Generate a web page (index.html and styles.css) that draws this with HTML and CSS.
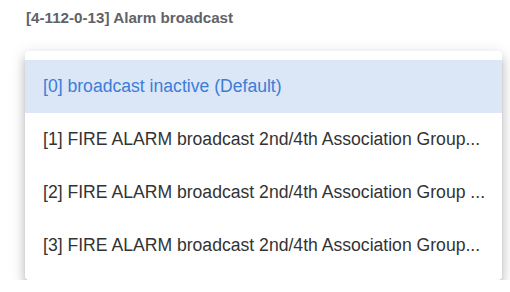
FILE: index.html
```html
<!DOCTYPE html>
<html lang="en">
<head>
  <meta charset="UTF-8" />
  <title>Alarm broadcast</title>
  <link rel="stylesheet" href="styles.css">
</head>
<body>
  <div class="field">
    <div class="field-label">[4-112-0-13] Alarm broadcast</div>
    <ul class="menu">
      <li class="menu-item selected">[0] broadcast inactive (Default)</li>
      <li class="menu-item">[1] FIRE ALARM broadcast 2nd/4th Association Group...</li>
      <li class="menu-item">[2] FIRE ALARM broadcast 2nd/4th Association Group ...</li>
      <li class="menu-item">[3] FIRE ALARM broadcast 2nd/4th Association Group...</li>
    </ul>
  </div>
</body>
</html>
```

FILE: styles.css
```css
body {
  font-family: 'Liberation Sans', Arial, sans-serif;
  margin: 0;
  padding: 0;
  background-color: #fff;
  color: #333;
}
.field {
  padding: 9px 8px 0 25px;
}
.field-label {
  font-size: 15.2px;
  font-weight: bold;
  color: #5f6368;
  padding-left: 1px;
  line-height: 18px;
}
.menu {
  list-style: none;
  margin: 24px 0 0;
  padding: 9px 0 8px;
  background-color: #fff;
  border-radius: 4px;
  box-shadow: 0 5px 5px -3px rgba(0, 0, 0, 0.2), 0 8px 10px 1px rgba(0, 0, 0, 0.14), 0 3px 14px 2px rgba(0, 0, 0, 0.12);
}
.menu-item {
  height: 53px;
  line-height: 53px;
  padding: 0 8px 0 18px;
  font-size: 17.6px;
  color: #333;
  white-space: nowrap;
  overflow: hidden;
}
.menu-item.selected {
  background-color: #dbe6f7;
  color: #3b7dd8;
}
```
